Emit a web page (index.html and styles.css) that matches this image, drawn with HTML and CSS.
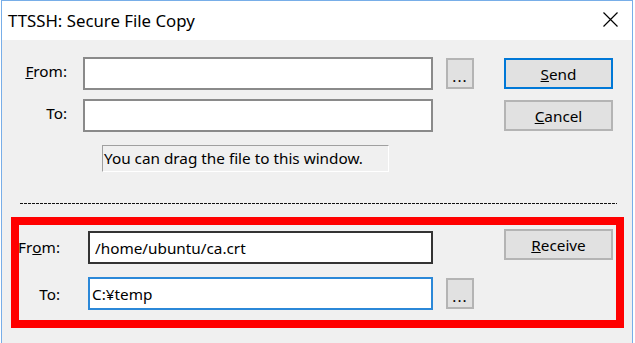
FILE: index.html
```html
<!DOCTYPE html>
<html lang="en">
<head>
    <meta charset="UTF-8">
    <title>TTSSH: Secure File Copy</title>
    <link rel="stylesheet" href="styles.css">
</head>
<body>
    <div class="window">
        <div class="title-bar">
            <span class="title">TTSSH: Secure File Copy</span>
            <svg class="close" width="15" height="15" viewBox="0 0 15 15">
                <path d="M0.5 0.5 L14.5 14.5 M14.5 0.5 L0.5 14.5" stroke="#000" stroke-width="1.2" fill="none"/>
            </svg>
        </div>
        <div class="content">
            <div class="send-grid">
                <label class="label top-label"><u>F</u>rom:</label>
                <div class="input"></div>
                <div class="browse">...</div>
                <div class="button default"><u>S</u>end</div>

                <label class="label top-label">To:</label>
                <div class="input"></div>
                <div></div>
                <div class="button"><u>C</u>ancel</div>

                <div class="drop-hint">You can drag the file to this window.</div>
            </div>

            <div class="separator"></div>

            <div class="receive-box">
                <div class="receive-grid">
                    <label class="label">Fr<u>o</u>m:</label>
                    <div class="input dark">/home/ubuntu/ca.crt</div>
                    <div></div>
                    <div class="button receive"><u>R</u>eceive</div>

                    <label class="label">To:</label>
                    <div class="input focus">C:¥temp</div>
                    <div class="browse">...</div>
                    <div></div>
                </div>
            </div>
        </div>
    </div>
</body>
</html>
```

FILE: styles.css
```css
body {
    margin: 0;
    background: #fff;
    height: 343px;
    overflow: hidden;
    font-family: "Segoe UI", "Noto Sans", sans-serif;
    font-size: 15.3px;
    color: #000;
}
.window {
    margin-left: 1px;
    width: 630px;
    height: 342px;
    overflow: hidden;
    border: 1px solid #78aee8;
    border-bottom: none;
    display: flex;
    flex-direction: column;
}
.title-bar {
    flex: none;
    height: 39px;
    background: #fff;
    display: flex;
    align-items: center;
    justify-content: space-between;
    padding: 0 14px 0 6px;
}
.title {
    font-size: 16.8px;
    margin-top: -1px;
}
.close {
    margin-top: -3px;
}
.content {
    flex: 1;
    background: #f0f0f0;
    padding-top: 17px;
}
.send-grid {
    display: grid;
    grid-template-columns: 81px 363px 58px 109px;
    grid-template-rows: 33px 33px;
    row-gap: 9px;
}
.receive-grid {
    display: grid;
    grid-template-columns: 69px 358px 58px 109px;
    grid-template-rows: 35px 33px;
    row-gap: 13px;
}
.label {
    display: flex;
    align-items: center;
    justify-content: flex-end;
    padding-right: 28px;
}
.top-label {
    padding-right: 16px;
    padding-bottom: 5px;
}
.input {
    box-sizing: border-box;
    width: 350px;
    height: 33px;
    background: #fff;
    border: 2px solid #8a8a8a;
    display: flex;
    align-items: center;
    padding: 0 5px;
    white-space: nowrap;
}
.receive-grid .input {
    width: 345px;
    align-self: end;
}
.input.dark {
    border-color: #333;
}
.input.focus {
    border-color: #2b88d8;
    padding-left: 2px;
}
.browse {
    box-sizing: border-box;
    width: 28px;
    height: 31px;
    align-self: center;
    background: #e1e1e1;
    border: 2px solid #b4b4b4;
    display: flex;
    align-items: center;
    justify-content: center;
    letter-spacing: 1px;
    padding-top: 4px;
}
.button {
    box-sizing: border-box;
    width: 109px;
    height: 31px;
    align-self: center;
    background: #e1e1e1;
    border: 2px solid #b4b4b4;
    display: flex;
    align-items: center;
    justify-content: center;
}
.button.default {
    border-color: #0078d7;
}
.button.receive {
    align-self: start;
}
.drop-hint {
    grid-column: 2 / 4;
    box-sizing: border-box;
    margin: 4px 0 0 19px;
    width: 287px;
    height: 27px;
    border: 1px solid #fff;
    border-top-color: #a0a0a0;
    border-left-color: #a0a0a0;
    padding-left: 1px;
    line-height: 24px;
    white-space: nowrap;
}
.separator {
    margin: 31px 0 0 18px;
    width: 597px;
    height: 1px;
    background: repeating-linear-gradient(to right, #111 0 3px, transparent 3px 4px);
}
.receive-box {
    box-sizing: border-box;
    margin: 13px 0 0 9px;
    width: 613px;
    border: 8px solid #ff0000;
    padding: 4px 0 10px;
}
```
